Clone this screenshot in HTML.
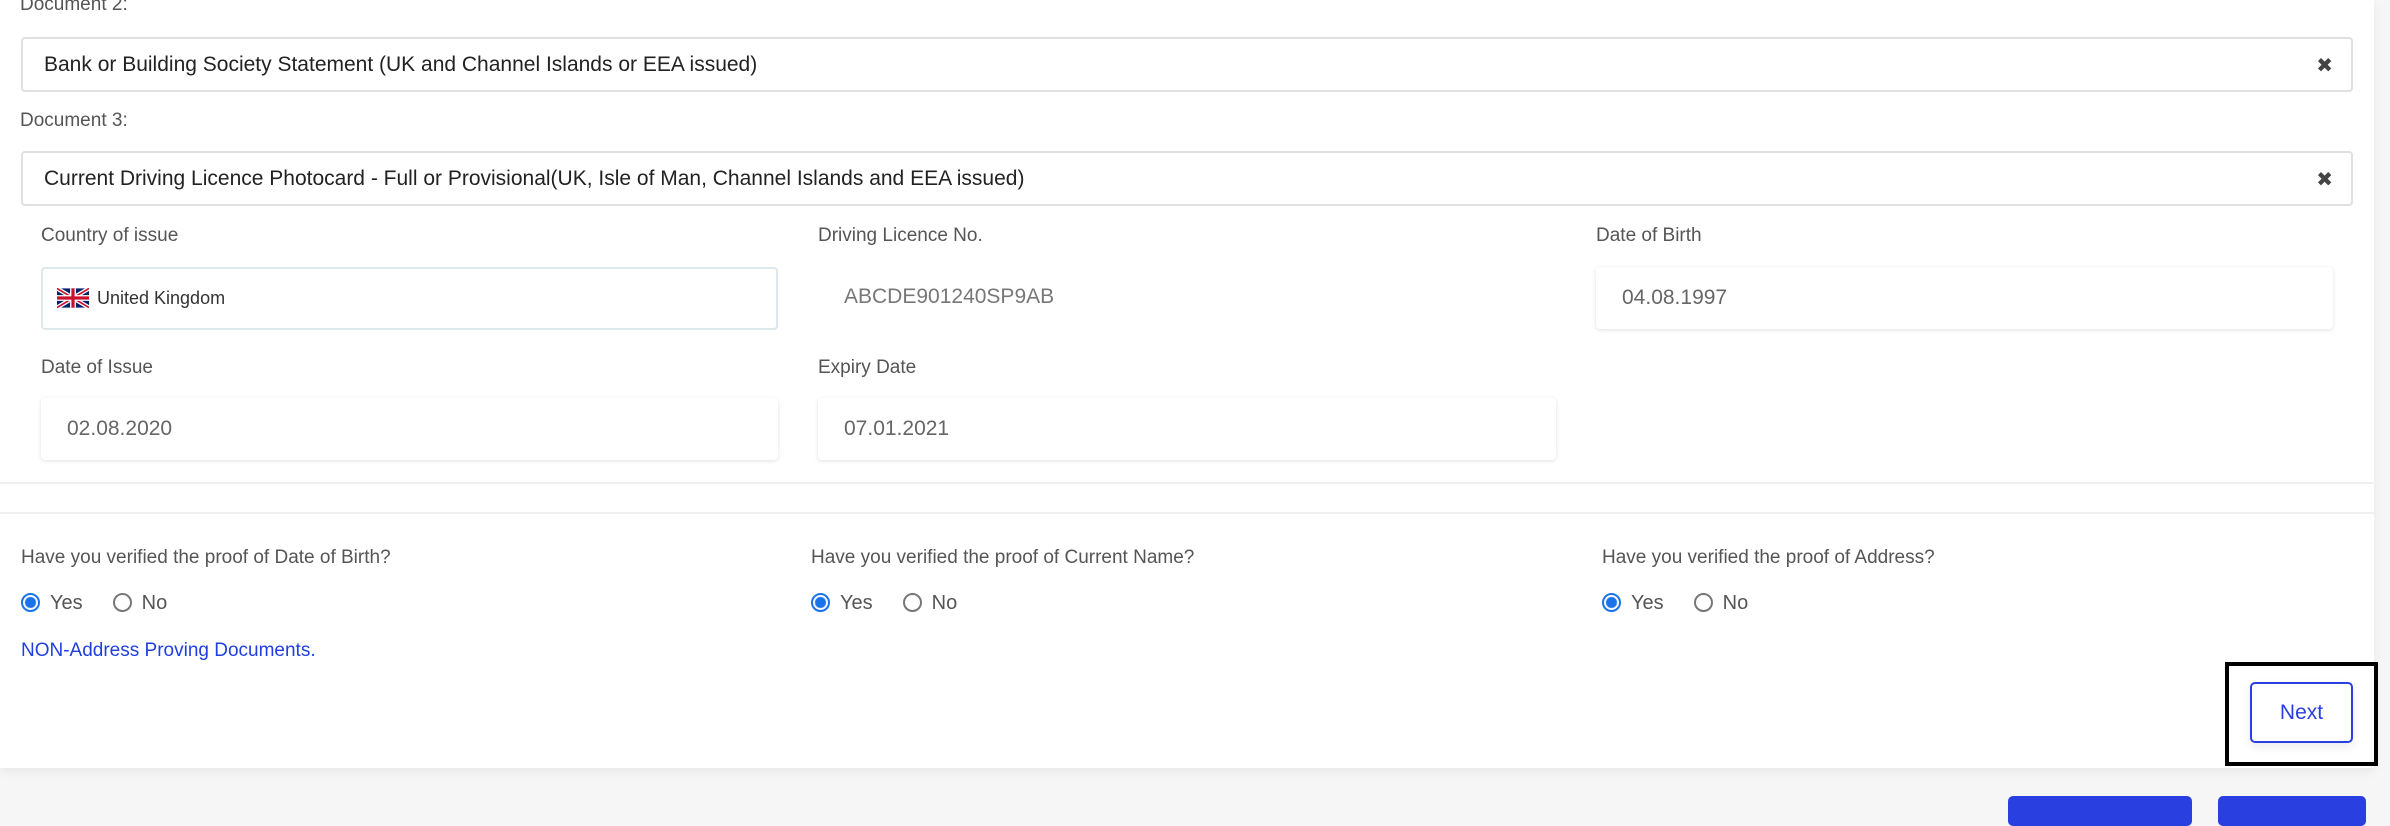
<!DOCTYPE html>
<html><head><style>
*{box-sizing:border-box;margin:0;padding:0}
body{width:2390px;height:810px;background:#f6f6f6;font-family:"Liberation Sans",sans-serif;position:relative;overflow:hidden}
.card{position:absolute;left:0;top:0;width:2374px;height:768px;background:#fff;box-shadow:0 4px 10px rgba(0,0,0,0.06)}
.a{position:absolute}
.lbl{font-size:19px;color:#555}
.sel{position:absolute;left:21px;width:2332px;height:55px;border:2px solid #e0e0e0;border-radius:4px;font-size:21px;color:#222;padding-left:21px;line-height:51px}
.x{position:absolute;right:18px;top:2px;font-size:20px;color:#444}
.inp{position:absolute;height:62px;background:#fff;border-radius:4px;box-shadow:0 1px 4px rgba(0,0,0,0.12);font-size:21px;color:#666;line-height:62px;padding-left:26px}
.q{font-size:19px;color:#555}
.r{position:absolute;font-size:20px;color:#555;line-height:22px}
.rb{display:inline-block;width:19px;height:19px;border-radius:50%;border:2px solid #777;vertical-align:-3px;margin-right:10px}
.rb.on{border:2px solid #1a73e8;background:radial-gradient(circle,#1a73e8 5px,#fff 6px)}
</style></head><body>
<div class="card">
<div class="a lbl" style="left:20px;top:-6px">Document 2:</div>
<div class="sel" style="top:37px">Bank or Building Society Statement (UK and Channel Islands or EEA issued)<span class="x">✖</span></div>
<div class="a lbl" style="left:20px;top:110px">Document 3:</div>
<div class="sel" style="top:151px">Current Driving Licence Photocard - Full or Provisional(UK, Isle of Man, Channel Islands and EEA issued)<span class="x">✖</span></div>

<div class="a lbl" style="left:41px;top:225px">Country of issue</div>
<div class="a lbl" style="left:818px;top:225px">Driving Licence No.</div>
<div class="a lbl" style="left:1596px;top:225px">Date of Birth</div>
<div class="a" style="left:41px;top:267px;width:737px;height:63px;border:2px solid #dde8ea;border-radius:4px;font-size:18px;color:#333;line-height:59px;padding-left:14px">
<svg width="32" height="20" viewBox="0 0 60 36" style="vertical-align:-4px;margin-right:8px"><rect width="60" height="36" fill="#012169"/><path d="M0,0 60,36M60,0 0,36" stroke="#fff" stroke-width="8"/><path d="M0,0 60,36M60,0 0,36" stroke="#C8102E" stroke-width="3"/><path d="M30,0v36M0,18h60" stroke="#fff" stroke-width="11"/><path d="M30,0v36M0,18h60" stroke="#C8102E" stroke-width="6"/></svg>United Kingdom</div>
<div class="a" style="left:844px;top:285px;font-size:21px;color:#777">ABCDE901240SP9AB</div>
<div class="inp" style="left:1596px;top:267px;width:737px">04.08.1997</div>

<div class="a lbl" style="left:41px;top:357px">Date of Issue</div>
<div class="a lbl" style="left:818px;top:357px">Expiry Date</div>
<div class="inp" style="left:41px;top:398px;width:737px">02.08.2020</div>
<div class="inp" style="left:818px;top:398px;width:738px">07.01.2021</div>

<div class="a" style="left:0;top:482px;width:2374px;height:2px;background:#f0f0f0"></div>
<div class="a" style="left:0;top:512px;width:2374px;height:2px;background:#f0f0f0"></div>

<div class="a q" style="left:21px;top:547px">Have you verified the proof of Date of Birth?</div>
<div class="a q" style="left:811px;top:547px">Have you verified the proof of Current Name?</div>
<div class="a q" style="left:1602px;top:547px">Have you verified the proof of Address?</div>
<div class="r" style="left:21px;top:592px"><span class="rb on"></span>Yes<span class="rb" style="margin-left:30px"></span>No</div>
<div class="r" style="left:811px;top:592px"><span class="rb on"></span>Yes<span class="rb" style="margin-left:30px"></span>No</div>
<div class="r" style="left:1602px;top:592px"><span class="rb on"></span>Yes<span class="rb" style="margin-left:30px"></span>No</div>
<div class="a" style="left:21px;top:640px;font-size:19px;color:#1f3fe0">NON-Address Proving Documents.</div>

<div class="a" style="left:2250px;top:682px;width:103px;height:61px;border:2px solid #2a3fdf;border-radius:5px;color:#2a3fdf;font-size:21px;text-align:center;line-height:57px;box-shadow:0 4px 10px rgba(0,0,0,0.08)">Next</div>
</div>
<div class="a" style="left:2225px;top:662px;width:153px;height:104px;border:4px solid #000"></div>
<div class="a" style="left:2008px;top:796px;width:184px;height:30px;background:#2a3fdf;border-radius:5px"></div>
<div class="a" style="left:2218px;top:796px;width:148px;height:30px;background:#2a3fdf;border-radius:5px"></div>
</body></html>
